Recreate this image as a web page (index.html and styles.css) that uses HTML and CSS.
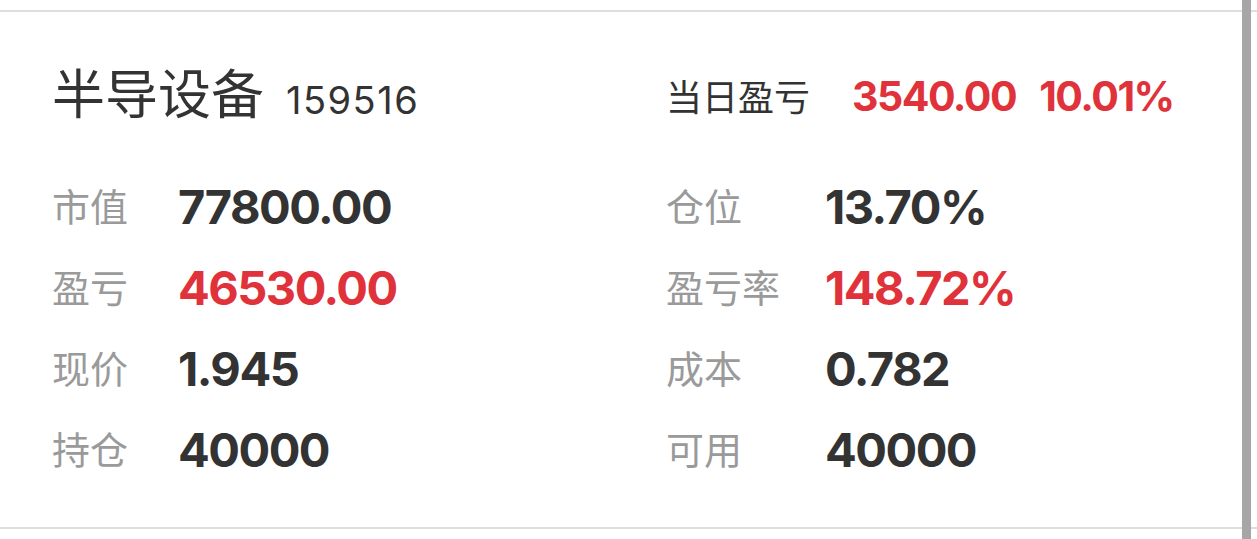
FILE: index.html
```html
<!DOCTYPE html>
<html lang="zh-CN">
<head>
    <meta charset="UTF-8">
    <meta name="viewport" content="width=device-width, initial-scale=1.0">
    <title>持仓详情</title>
    <link rel="stylesheet" href="styles.css">
</head>
<body>
    <div class="page">
        <div class="position-card">
            <div class="card-head">
                <div class="fund-name">
                    <span class="name">半导设备</span>
                    <span class="code">159516</span>
                </div>
                <div class="today">
                    <span class="today-label">当日盈亏</span>
                    <span class="today-amount up">3540.00</span>
                    <span class="today-rate up">10.01%</span>
                </div>
            </div>

            <div class="stats">
                <div class="stat-col left">
                    <div class="stat"><span class="label">市值</span><span class="value">77800.00</span></div>
                    <div class="stat"><span class="label">盈亏</span><span class="value up">46530.00</span></div>
                    <div class="stat"><span class="label">现价</span><span class="value">1.945</span></div>
                    <div class="stat"><span class="label">持仓</span><span class="value">40000</span></div>
                </div>
                <div class="stat-col right">
                    <div class="stat"><span class="label">仓位</span><span class="value">13.70%</span></div>
                    <div class="stat"><span class="label">盈亏率</span><span class="value up">148.72%</span></div>
                    <div class="stat"><span class="label">成本</span><span class="value">0.782</span></div>
                    <div class="stat"><span class="label">可用</span><span class="value">40000</span></div>
                </div>
            </div>
        </div>
    </div>

    <!-- scroll indicator on the right edge -->
    <div class="scroll-thumb"></div>
</body>
</html>
```

FILE: styles.css
```css
body {
    margin: 0;
    background-color: #fff;
    font-family: Inter, "Noto Sans CJK SC", sans-serif;
    color: #333;
}
.page {
    padding-top: 10px;
}
.position-card {
    border-top: 2px solid #dedede;
    border-bottom: 2px solid #dedede;
    padding: 41px 0 37px 52px;
}
.card-head {
    display: grid;
    grid-template-columns: 614px 1fr;
    height: 66px;
    align-items: center;
    margin-bottom: 47px;
}
.fund-name {
    display: flex;
    align-items: baseline;
}
.name {
    font-family: "Noto Sans CJK SC", sans-serif;
    font-size: 53px;
    color: #333;
}
.code {
    font-size: 38px;
    letter-spacing: 1.5px;
    margin-left: 22px;
    color: #333;
}
.today {
    display: flex;
    align-items: baseline;
    padding-top: 8px;
}
.today-label {
    font-family: "Noto Sans CJK SC", sans-serif;
    font-size: 36px;
    margin-right: 42px;
}
.today-amount,
.today-rate {
    font-size: 41px;
    font-weight: 700;
    letter-spacing: -1.5px;
}
.today-amount {
    margin-right: 23px;
}
.stats {
    display: grid;
    grid-template-columns: 614px 1fr;
}
.stat {
    display: flex;
    align-items: center;
    height: 81px;
}
.label {
    font-family: "Noto Sans CJK SC", sans-serif;
    font-size: 38px;
    line-height: 1;
    margin-top: -3px;
    color: #9a9a9a;
}
.left .label {
    width: 126px;
}
.right .label {
    width: 159px;
}
.value {
    font-size: 47px;
    font-weight: 700;
    letter-spacing: -1.5px;
    color: #333;
}
.up {
    color: #e0323a;
}
.scroll-thumb {
    position: fixed;
    top: 0;
    right: 6px;
    width: 9px;
    height: 100%;
    background-color: #a6a6a6;
}
```
